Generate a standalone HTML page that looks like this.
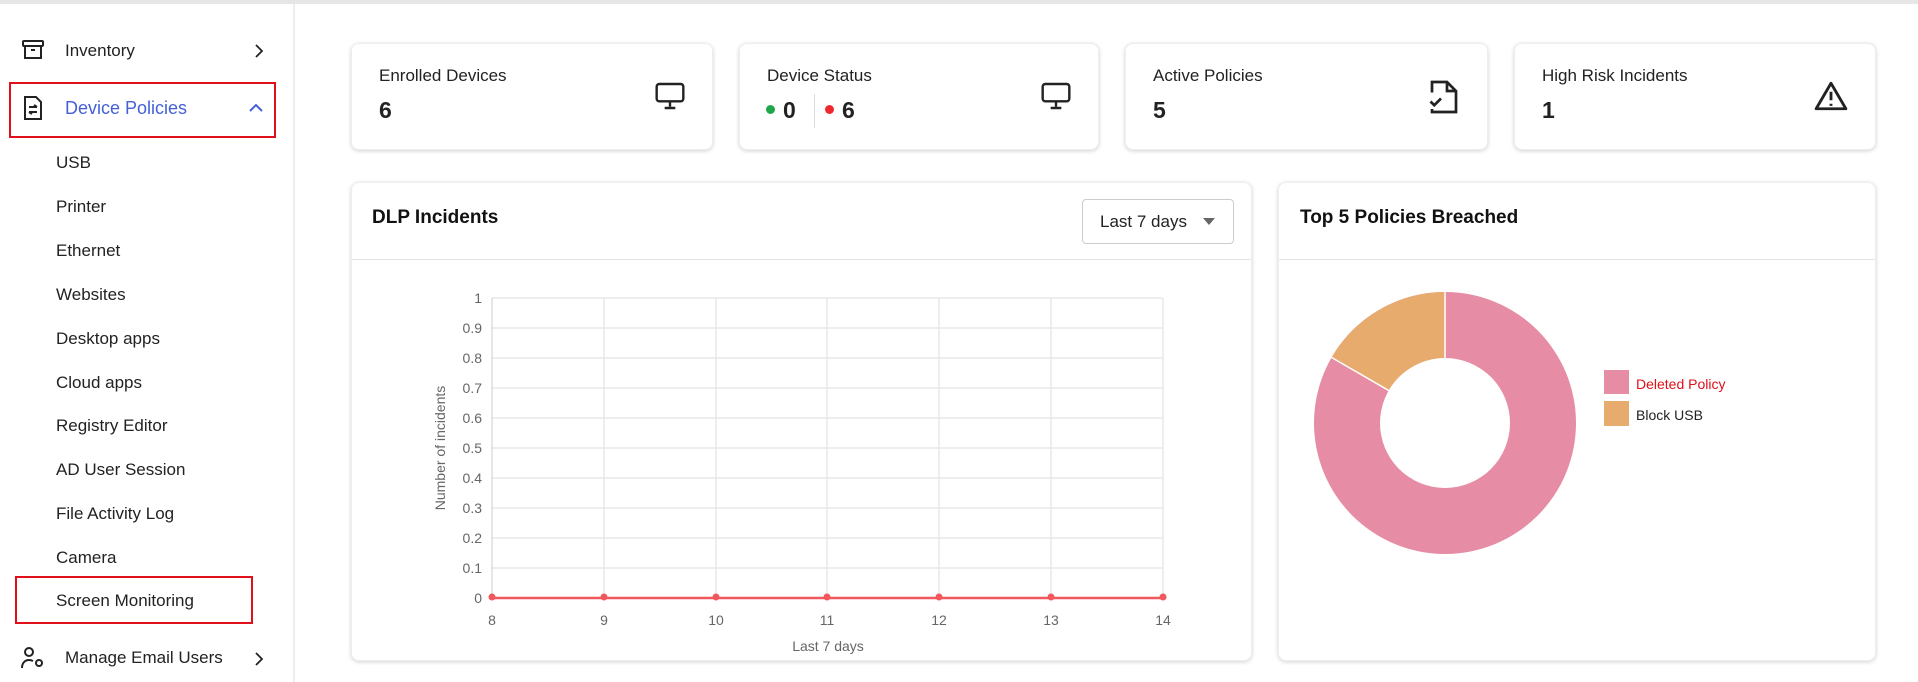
<!DOCTYPE html>
<html><head><meta charset="utf-8"><style>
*{box-sizing:border-box;margin:0;padding:0}
body{width:1918px;height:682px;overflow:hidden;background:#fff;font-family:"Liberation Sans",sans-serif;color:#222;position:relative}
.a{position:absolute}
.top{left:0;top:0;width:1918px;height:4px;background:#e6e6e6}
.side{left:0;top:4px;width:295px;height:678px;border-right:2px solid #eee;background:#fff}
.nav{position:absolute;font-size:17px;color:#222;line-height:20px}
.sub{position:absolute;left:56px;font-size:17px;color:#222;line-height:20px}
.card{position:absolute;background:#fff;border-radius:8px;box-shadow:0 1px 4px rgba(0,0,0,.18);border:1px solid #eee}
.ct{position:absolute;left:27px;top:22px;font-size:17px;color:#222}
.cv{position:absolute;left:27px;top:53px;font-size:23px;font-weight:bold;color:#222}
.ht{position:absolute;font-size:19px;font-weight:bold;color:#111}
</style></head><body>
<div class="a top"></div>
<div class="a side"></div>
<!-- Inventory -->
<svg class="a" style="left:21px;top:38px" width="24" height="24" viewBox="0 0 24 24" fill="none" stroke="#222" stroke-width="2"><rect x="2" y="3" width="20" height="5" rx="1"/><path d="M4 8v12h16V8M10 12h4"/></svg>
<div class="nav" style="left:65px;top:41px">Inventory</div>
<svg class="a" style="left:252px;top:44px" width="14" height="14" viewBox="0 0 14 14" fill="none" stroke="#222" stroke-width="1.8"><path d="M4 1l6 6-6 6"/></svg>
<!-- Device Policies -->
<div class="a" style="left:9px;top:82px;width:267px;height:56px;border:2px solid #e0101a"></div>
<svg class="a" style="left:21px;top:95px" width="24" height="26" viewBox="0 0 24 26" fill="none" stroke="#222" stroke-width="2"><path d="M4 2h11l5 5v17H4z"/><path d="M8 12h8M13 10l3 2M8 17h8M8 17l3 2"/></svg>
<div class="nav" style="left:65px;top:98px;color:#4560d8;font-size:18px">Device Policies</div>
<svg class="a" style="left:248px;top:101px" width="16" height="14" viewBox="0 0 16 14" fill="none" stroke="#4560d8" stroke-width="2"><path d="M2 10l6-6 6 6"/></svg>
<div class="sub" style="top:153px">USB</div>
<div class="sub" style="top:197px">Printer</div>
<div class="sub" style="top:241px">Ethernet</div>
<div class="sub" style="top:285px">Websites</div>
<div class="sub" style="top:329px">Desktop apps</div>
<div class="sub" style="top:373px">Cloud apps</div>
<div class="sub" style="top:416px">Registry Editor</div>
<div class="sub" style="top:460px">AD User Session</div>
<div class="sub" style="top:504px">File Activity Log</div>
<div class="sub" style="top:548px">Camera</div>
<div class="a" style="left:15px;top:576px;width:238px;height:48px;border:2px solid #e0101a"></div>
<div class="sub" style="top:591px">Screen Monitoring</div>
<svg class="a" style="left:20px;top:646px" width="26" height="24" viewBox="0 0 26 24" fill="none" stroke="#222" stroke-width="2"><circle cx="9" cy="6" r="4"/><path d="M2 22c0-5 3-8 7-8 2 0 3 .5 4 1"/><circle cx="19" cy="17" r="3"/></svg>
<div class="nav" style="left:65px;top:648px">Manage Email Users</div>
<svg class="a" style="left:252px;top:652px" width="14" height="14" viewBox="0 0 14 14" fill="none" stroke="#222" stroke-width="1.8"><path d="M4 1l6 6-6 6"/></svg>

<!-- Stat cards -->
<div class="card" style="left:351px;top:43px;width:362px;height:107px"><div class="ct">Enrolled Devices</div><div class="cv">6</div>
<svg class="a" style="left:302px;top:36px" width="32" height="32" viewBox="0 0 24 24" fill="none" stroke="#222" stroke-width="1.8"><rect x="2" y="3" width="20" height="13" rx="2"/><path d="M12 16v4M8 21h8"/></svg></div>
<div class="card" style="left:739px;top:43px;width:360px;height:107px"><div class="ct">Device Status</div>
<div class="a" style="left:26px;top:61px;width:9px;height:9px;border-radius:50%;background:#1fa84a"></div>
<div class="cv" style="left:43px">0</div>
<div class="a" style="left:74px;top:50px;width:1px;height:34px;background:#ddd"></div>
<div class="a" style="left:85px;top:61px;width:9px;height:9px;border-radius:50%;background:#f0282d"></div>
<div class="cv" style="left:102px">6</div>
<svg class="a" style="left:300px;top:36px" width="32" height="32" viewBox="0 0 24 24" fill="none" stroke="#222" stroke-width="1.8"><rect x="2" y="3" width="20" height="13" rx="2"/><path d="M12 16v4M8 21h8"/></svg></div>
<div class="card" style="left:1125px;top:43px;width:363px;height:107px"><div class="ct">Active Policies</div><div class="cv">5</div>
<svg class="a" style="left:303px;top:35px" width="30" height="36" viewBox="0 0 20 24" fill="none" stroke="#222" stroke-width="1.8"><path d="M2 9V2h10l6 6v14H2v-2M12 2v6h6"/><path d="M1 15l2.5 2.5L8 13"/></svg></div>
<div class="card" style="left:1514px;top:43px;width:362px;height:107px"><div class="ct">High Risk Incidents</div><div class="cv">1</div>
<svg class="a" style="left:299px;top:36px" width="34" height="32" viewBox="0 0 24 22" fill="none" stroke="#222" stroke-width="2"><path d="M12 2L1.5 20h21z" stroke-linejoin="round"/><path d="M12 8v6M12 16.5v1.5"/></svg></div>

<!-- DLP card -->
<div class="card" style="left:351px;top:182px;width:901px;height:479px">
<div class="ht" style="left:20px;top:24px">DLP Incidents</div>
<div class="a" style="left:730px;top:16px;width:152px;height:45px;border:1px solid #ccc;border-radius:4px;font-size:17px;color:#222;padding:12px 0 0 17px">Last 7 days</div>
<svg class="a" style="left:851px;top:35px" width="12" height="8"><path d="M0 0h12L6 7z" fill="#666"/></svg>
<div class="a" style="left:0;top:76px;width:899px;height:1px;background:#e3e3e3"></div>
</div>
<svg class="a" style="left:0;top:0" width="1918" height="682">
<g stroke="#e8e8e8" stroke-width="1.5">
<line x1="492" y1="298" x2="1163" y2="298"/><line x1="492" y1="328" x2="1163" y2="328"/><line x1="492" y1="358" x2="1163" y2="358"/><line x1="492" y1="388" x2="1163" y2="388"/><line x1="492" y1="418" x2="1163" y2="418"/><line x1="492" y1="448" x2="1163" y2="448"/><line x1="492" y1="478" x2="1163" y2="478"/><line x1="492" y1="508" x2="1163" y2="508"/><line x1="492" y1="538" x2="1163" y2="538"/><line x1="492" y1="568" x2="1163" y2="568"/>
<line x1="604" y1="298" x2="604" y2="598"/><line x1="716" y1="298" x2="716" y2="598"/><line x1="827" y1="298" x2="827" y2="598"/><line x1="939" y1="298" x2="939" y2="598"/><line x1="1051" y1="298" x2="1051" y2="598"/><line x1="1163" y1="298" x2="1163" y2="598"/>
</g>
<line x1="492" y1="298" x2="492" y2="598" stroke="#ccc"/>
<g font-family="Liberation Sans,sans-serif" font-size="14" fill="#666" text-anchor="end">
<text x="482" y="303">1</text><text x="482" y="333">0.9</text><text x="482" y="363">0.8</text><text x="482" y="393">0.7</text><text x="482" y="423">0.6</text><text x="482" y="453">0.5</text><text x="482" y="483">0.4</text><text x="482" y="513">0.3</text><text x="482" y="543">0.2</text><text x="482" y="573">0.1</text><text x="482" y="603">0</text>
</g>
<g font-family="Liberation Sans,sans-serif" font-size="14" fill="#666" text-anchor="middle">
<text x="492" y="625">8</text><text x="604" y="625">9</text><text x="716" y="625">10</text><text x="827" y="625">11</text><text x="939" y="625">12</text><text x="1051" y="625">13</text><text x="1163" y="625">14</text>
<text x="828" y="651">Last 7 days</text>
<text transform="translate(445 448) rotate(-90)">Number of incidents</text>
</g>
<line x1="492" y1="598" x2="1163" y2="598" stroke="#f0585e" stroke-width="2.5"/>
<g fill="#f0585e"><circle cx="492" cy="597" r="3.5"/><circle cx="604" cy="597" r="3.5"/><circle cx="716" cy="597" r="3.5"/><circle cx="827" cy="597" r="3.5"/><circle cx="939" cy="597" r="3.5"/><circle cx="1051" cy="597" r="3.5"/><circle cx="1163" cy="597" r="3.5"/></g>
</svg>

<!-- Top 5 card -->
<div class="card" style="left:1278px;top:182px;width:598px;height:479px">
<div class="ht" style="left:21px;top:24px">Top 5 Policies Breached</div>
<div class="a" style="left:0;top:76px;width:596px;height:1px;background:#e3e3e3"></div>
</div>
<svg class="a" style="left:0;top:0" width="1918" height="682">
<circle cx="1445" cy="423" r="131" fill="#e68ca5"/>
<path d="M1445 423L1331.6 357.5A131 131 0 0 1 1445 292Z" fill="#e8ab6e"/>
<path d="M1445 423L1331.6 357.5M1445 423L1445 292" stroke="#fff" stroke-width="1.5"/>
<circle cx="1445" cy="423" r="65" fill="#fff"/>
<rect x="1604" y="370" width="25" height="24" fill="#e68ca5"/>
<rect x="1604" y="401" width="25" height="25" fill="#e8ab6e"/>
<text x="1636" y="389" font-family="Liberation Sans,sans-serif" font-size="14" fill="#e0101a">Deleted Policy</text>
<text x="1636" y="420" font-family="Liberation Sans,sans-serif" font-size="14" fill="#222">Block USB</text>
</svg>
</body></html>
